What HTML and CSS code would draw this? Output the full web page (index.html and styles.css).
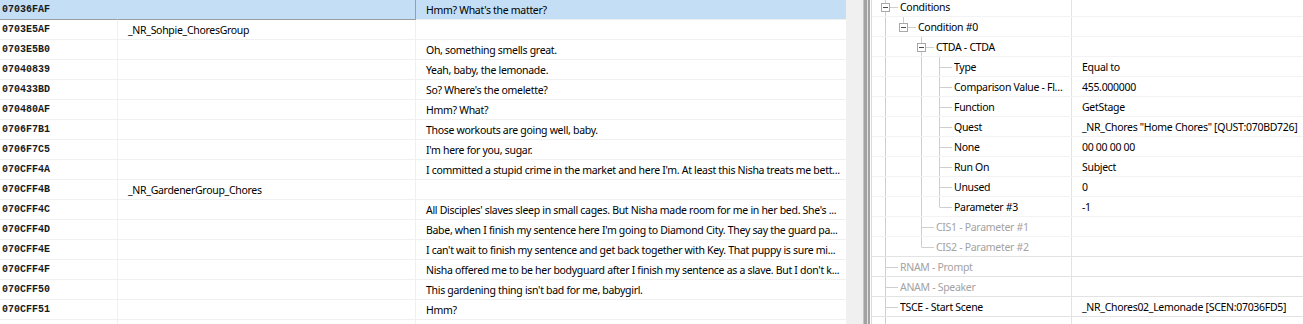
FILE: index.html
```html
<!DOCTYPE html>
<html>
<head>
<meta charset="utf-8">
<link rel="stylesheet" href="styles.css">
</head>
<body>
<div class="left">
  <div class="row sel"><div class="cell id f1">07036FAF</div><div class="cell f2"></div><div class="cell txt">Hmm? What's the matter?</div></div>
  <div class="row"><div class="cell id">0703E5AF</div><div class="cell">_NR_Sohpie_ChoresGroup</div><div class="cell txt"></div></div>
  <div class="row"><div class="cell id">0703E5B0</div><div class="cell"></div><div class="cell txt">Oh, something smells great.</div></div>
  <div class="row"><div class="cell id">07040839</div><div class="cell"></div><div class="cell txt">Yeah, baby, the lemonade.</div></div>
  <div class="row"><div class="cell id">070433BD</div><div class="cell"></div><div class="cell txt">So? Where's the omelette?</div></div>
  <div class="row"><div class="cell id">070480AF</div><div class="cell"></div><div class="cell txt">Hmm? What?</div></div>
  <div class="row"><div class="cell id">0706F7B1</div><div class="cell"></div><div class="cell txt">Those workouts are going well, baby.</div></div>
  <div class="row"><div class="cell id">0706F7C5</div><div class="cell"></div><div class="cell txt">I'm here for you, sugar.</div></div>
  <div class="row"><div class="cell id">070CFF4A</div><div class="cell"></div><div class="cell txt">I committed a stupid crime in the market and here I'm. At least this Nisha treats me bett...</div></div>
  <div class="row"><div class="cell id">070CFF4B</div><div class="cell">_NR_GardenerGroup_Chores</div><div class="cell txt"></div></div>
  <div class="row"><div class="cell id">070CFF4C</div><div class="cell"></div><div class="cell txt">All Disciples' slaves sleep in small cages. But Nisha made room for me in her bed. She's ...</div></div>
  <div class="row"><div class="cell id">070CFF4D</div><div class="cell"></div><div class="cell txt">Babe, when I finish my sentence here I'm going to Diamond City. They say the guard pa...</div></div>
  <div class="row"><div class="cell id">070CFF4E</div><div class="cell"></div><div class="cell txt">I can't wait to finish my sentence and get back together with Key. That puppy is sure mi...</div></div>
  <div class="row"><div class="cell id">070CFF4F</div><div class="cell"></div><div class="cell txt">Nisha offered me to be her bodyguard after I finish my sentence as a slave. But I don't k...</div></div>
  <div class="row"><div class="cell id">070CFF50</div><div class="cell"></div><div class="cell txt">This gardening thing isn't bad for me, babygirl.</div></div>
  <div class="row"><div class="cell id">070CFF51</div><div class="cell"></div><div class="cell txt">Hmm?</div></div>
  <div class="row"><div class="cell id"></div><div class="cell"></div><div class="cell txt"></div></div>
</div>
<div class="splitter"></div>
<div class="right">
  <div class="tree">
    <div class="trow top"><div class="name"><svg class="g" width="28" height="19"><path class="ln" d="M13.5 0V6M13.5 14V19M18 10.5H26"/><rect class="box" x="9.5" y="6.5" width="8" height="8"/><path class="mn" d="M11 10.5H16"/></svg><span>Conditions</span></div><div class="val"></div></div>
    <div class="trow"><div class="name"><svg class="g" width="46" height="19"><path class="ln" d="M13.5 0V19M31.5 0V6M36 10.5H44"/><rect class="box" x="27.5" y="6.5" width="8" height="8"/><path class="mn" d="M29 10.5H34"/></svg><span>Condition #0</span></div><div class="val"></div></div>
    <div class="trow"><div class="name"><svg class="g" width="64" height="19"><path class="ln" d="M13.5 0V19M49.5 0V6M49.5 14V19M54 10.5H62"/><rect class="box" x="45.5" y="6.5" width="8" height="8"/><path class="mn" d="M47 10.5H52"/></svg><span>CTDA - CTDA</span></div><div class="val"></div></div>
    <div class="trow"><div class="name"><svg class="g" width="82" height="19"><path class="ln" d="M13.5 0V19M49.5 0V19M67.5 0V19M68 10.5H80"/></svg><span>Type</span></div><div class="val">Equal to</div></div>
    <div class="trow"><div class="name"><svg class="g" width="82" height="19"><path class="ln" d="M13.5 0V19M49.5 0V19M67.5 0V19M68 10.5H80"/></svg><span>Comparison Value - Float</span></div><div class="val">455.000000</div></div>
    <div class="trow"><div class="name"><svg class="g" width="82" height="19"><path class="ln" d="M13.5 0V19M49.5 0V19M67.5 0V19M68 10.5H80"/></svg><span>Function</span></div><div class="val">GetStage</div></div>
    <div class="trow"><div class="name"><svg class="g" width="82" height="19"><path class="ln" d="M13.5 0V19M49.5 0V19M67.5 0V19M68 10.5H80"/></svg><span>Quest</span></div><div class="val">_NR_Chores "Home Chores" [QUST:070BD726]</div></div>
    <div class="trow"><div class="name"><svg class="g" width="82" height="19"><path class="ln" d="M13.5 0V19M49.5 0V19M67.5 0V19M68 10.5H80"/></svg><span>None</span></div><div class="val">00 00 00 00</div></div>
    <div class="trow"><div class="name"><svg class="g" width="82" height="19"><path class="ln" d="M13.5 0V19M49.5 0V19M67.5 0V19M68 10.5H80"/></svg><span>Run On</span></div><div class="val">Subject</div></div>
    <div class="trow"><div class="name"><svg class="g" width="82" height="19"><path class="ln" d="M13.5 0V19M49.5 0V19M67.5 0V19M68 10.5H80"/></svg><span>Unused</span></div><div class="val">0</div></div>
    <div class="trow"><div class="name"><svg class="g" width="82" height="19"><path class="ln" d="M13.5 0V19M49.5 0V19M67.5 0V10.5M68 10.5H80"/></svg><span>Parameter #3</span></div><div class="val">-1</div></div>
    <div class="trow"><div class="name dim"><svg class="g" width="64" height="19"><path class="ln" d="M13.5 0V19M49.5 0V19M50 10.5H62"/></svg><span>CIS1 - Parameter #1</span></div><div class="val"></div></div>
    <div class="trow"><div class="name dim"><svg class="g" width="64" height="19"><path class="ln" d="M13.5 0V19M49.5 0V10.5M50 10.5H62"/></svg><span>CIS2 - Parameter #2</span></div><div class="val"></div></div>
    <div class="trow top"><div class="name dim"><svg class="g" width="28" height="19"><path class="ln" d="M13.5 0V19M14 10.5H26"/></svg><span>RNAM - Prompt</span></div><div class="val"></div></div>
    <div class="trow top"><div class="name dim"><svg class="g" width="28" height="19"><path class="ln" d="M13.5 0V19M14 10.5H26"/></svg><span>ANAM - Speaker</span></div><div class="val"></div></div>
    <div class="trow top"><div class="name"><svg class="g" width="28" height="19"><path class="ln" d="M13.5 0V19M14 10.5H26"/></svg><span>TSCE - Start Scene</span></div><div class="val">_NR_Chores02_Lemonade [SCEN:07036FD5]</div></div>
    <div class="trow top"><div class="name"><svg class="g" width="28" height="19"><path class="ln" d="M13.5 0V19"/></svg><span></span></div><div class="val"></div></div>
  </div>
</div>
</body>
</html>
```

FILE: styles.css
```css
html, body {
  margin: 0;
  padding: 0;
}
body {
  width: 1303px;
  height: 324px;
  overflow: hidden;
  display: flex;
  background: #fff;
  color: #000;
  font-family: "Noto Sans", "Open Sans", sans-serif;
  font-size: 10.5px;
  letter-spacing: -0.3px;
}
.left {
  width: 846px;
  flex: none;
  overflow: hidden;
}
.row {
  display: grid;
  grid-template-columns: 118px 298px 430px;
  height: 20px;
}
.cell {
  box-sizing: border-box;
  height: 20px;
  border-right: 1px solid #f0f0f0;
  border-bottom: 1px solid #f0f0f0;
  padding-left: 10px;
  padding-top: 1px;
  line-height: 19px;
  white-space: nowrap;
  overflow: hidden;
  text-overflow: ellipsis;
}
.cell.txt {
  border-right: none;
  padding-right: 2px;
}
.cell.id {
  padding-left: 2px;
  padding-top: 0;
  font-family: "Liberation Mono", "DejaVu Sans Mono", monospace;
  font-weight: bold;
  font-size: 10px;
  letter-spacing: 0;
  color: #1a1a1a;
}
.sel {
  background: #c3def5;
}
.sel .f1 {
  border-right-color: transparent;
  border-bottom-color: #9e9e9e;
}
.sel .f2 {
  border-right-color: #9e9e9e;
  border-bottom-color: #9e9e9e;
}
.splitter {
  width: 26px;
  flex: none;
  background: linear-gradient(to right,
    #f0f0f0 0, #f0f0f0 17px,
    #c4c4c4 17px, #c4c4c4 18px,
    #a3a3a3 18px, #a3a3a3 21px,
    #e2e2e2 21px, #e2e2e2 22px,
    #a3a3a3 22px, #a3a3a3 24px,
    #ffffff 24px, #ffffff 25px,
    #d9d9d9 25px, #d9d9d9 26px);
}
.right {
  flex: 1;
  overflow: hidden;
}
.tree {
  margin-top: -3px;
}
.trow {
  display: grid;
  grid-template-columns: 200px 1fr;
  height: 20px;
  box-sizing: border-box;
  border-bottom: 1px solid #f3f3f3;
}
.trow.top {
  box-shadow: 0 -1px 0 #e3e3e3;
}
.name {
  display: flex;
  align-items: flex-start;
  min-width: 0;
  border-right: 1px solid #e3e3e3;
  white-space: nowrap;
  overflow: hidden;
}
.name span {
  overflow: hidden;
  text-overflow: ellipsis;
  line-height: 19px;
  margin-top: 1px;
  padding-right: 4px;
}
.name.dim {
  color: #a3a3a3;
}
.g {
  display: block;
  flex: none;
}
.ln {
  stroke: #cfcfcf;
  stroke-width: 1;
  fill: none;
}
.box {
  fill: #fff;
  stroke: #a8a8a8;
  stroke-width: 1;
}
.mn {
  stroke: #4a4a4a;
  stroke-width: 1;
  fill: none;
}
.val {
  padding-left: 10px;
  padding-top: 1px;
  line-height: 19px;
  white-space: nowrap;
  overflow: hidden;
}
```
